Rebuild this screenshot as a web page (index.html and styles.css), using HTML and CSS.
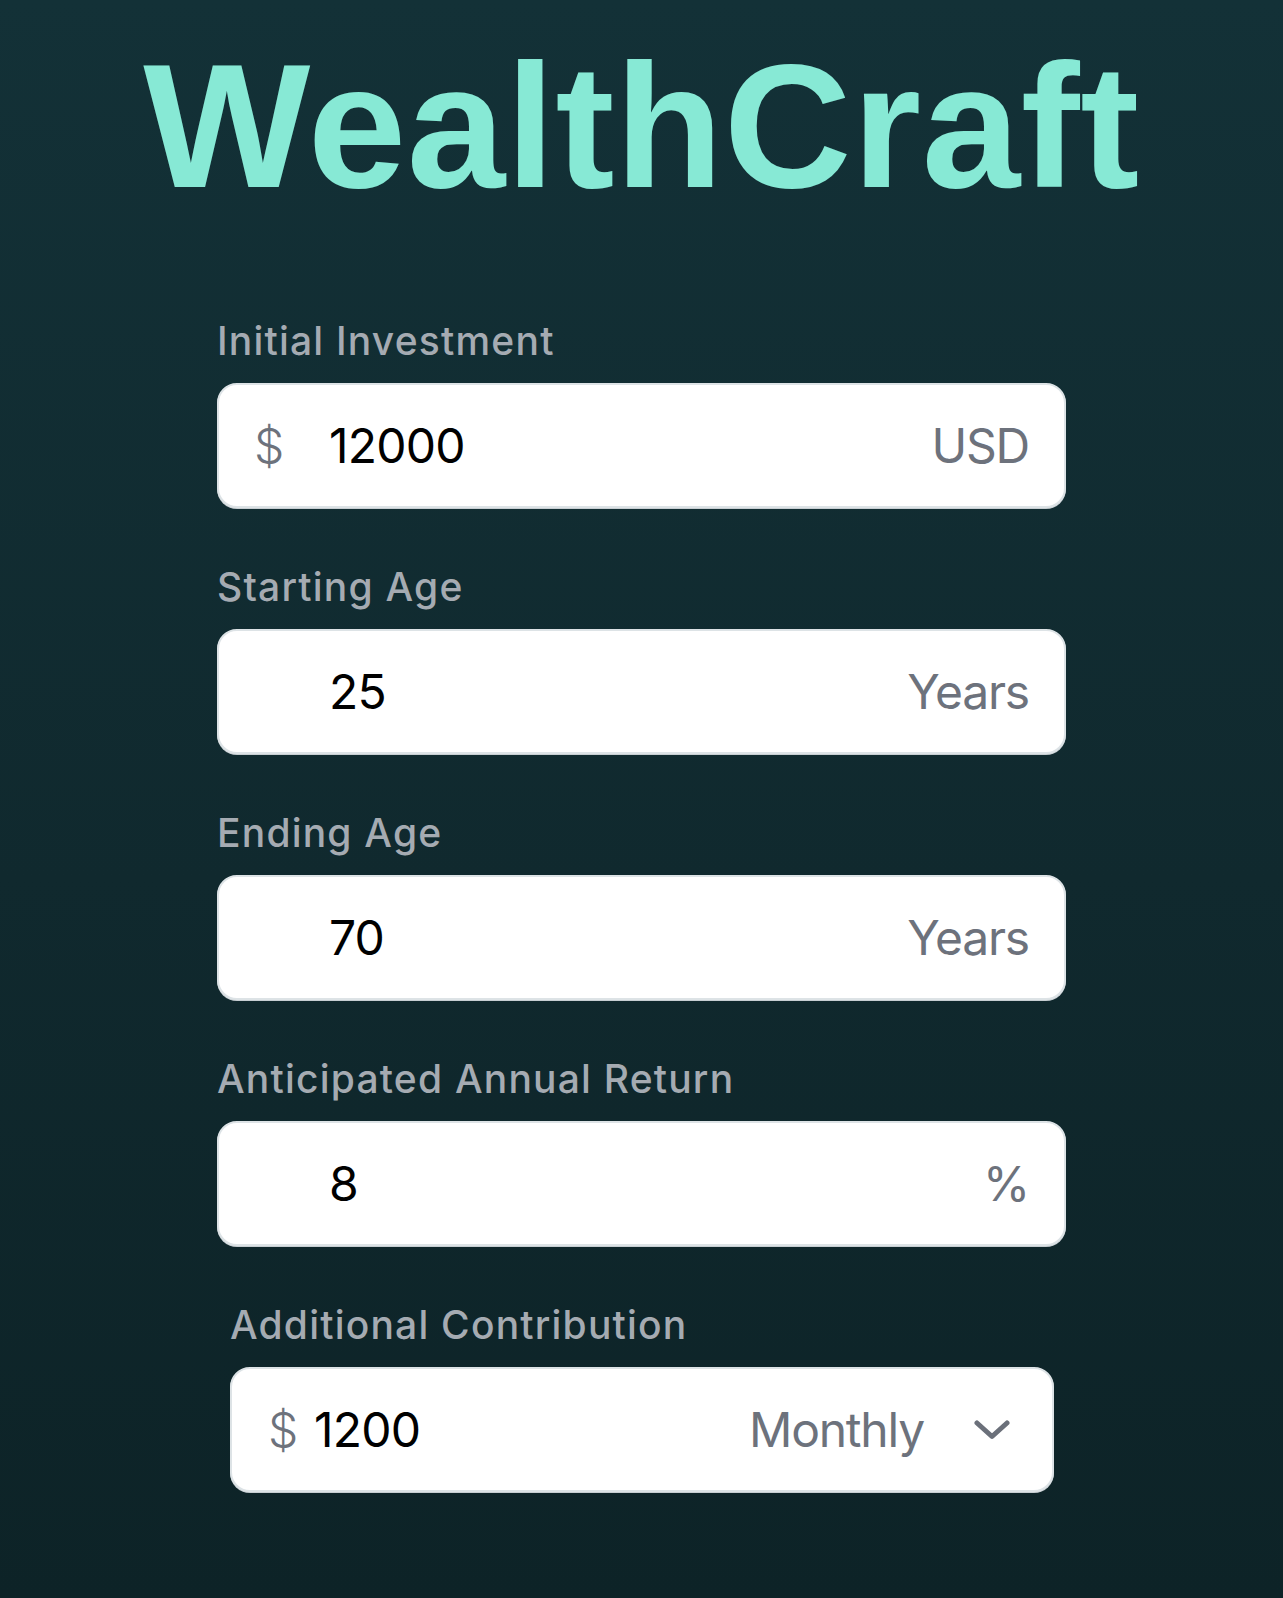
FILE: index.html
```html
<!DOCTYPE html>
<html lang="en">
<head>
<meta charset="utf-8">
<title>WealthCraft</title>
<link rel="stylesheet" href="styles.css">
</head>
<body>
<main class="app">
  <h1 class="brand">WealthCraft</h1>
  <form class="form">
    <div class="field">
      <label class="label">Initial Investment</label>
      <div class="box">
        <span class="prefix">$</span>
        <span class="value">12000</span>
        <span class="suffix">USD</span>
      </div>
    </div>
    <div class="field">
      <label class="label">Starting Age</label>
      <div class="box">
        <span class="prefix"></span>
        <span class="value">25</span>
        <span class="suffix">Years</span>
      </div>
    </div>
    <div class="field">
      <label class="label">Ending Age</label>
      <div class="box">
        <span class="prefix"></span>
        <span class="value">70</span>
        <span class="suffix">Years</span>
      </div>
    </div>
    <div class="field">
      <label class="label">Anticipated Annual Return</label>
      <div class="box">
        <span class="prefix"></span>
        <span class="value">8</span>
        <span class="suffix">%</span>
      </div>
    </div>
    <div class="field field-inset">
      <label class="label">Additional Contribution</label>
      <div class="box box-select">
        <span class="prefix prefix-tight">$</span>
        <span class="value">1200</span>
        <span class="suffix">Monthly</span>
        <svg class="chevron" viewBox="0 0 36 20" width="36" height="20" aria-hidden="true">
          <path d="M3 3 L18 16.5 L33 3" fill="none" stroke="#6b707a" stroke-width="5" stroke-linecap="round" stroke-linejoin="round"/>
        </svg>
      </div>
    </div>
  </form>
</main>
</body>
</html>
```
FILE: styles.css
```css
html, body {
  margin: 0;
  padding: 0;
}
body {
  min-height: 1598px;
  background: linear-gradient(180deg, #133137 0%, #10292e 55%, #0d2327 100%);
  font-family: "Inter", "Noto Sans", sans-serif;
}
.app {
  display: flex;
  flex-direction: column;
  align-items: center;
}
.brand {
  margin: 38px 0 0 0;
  font-family: "Liberation Sans", Arial, sans-serif;
  font-weight: 700;
  font-size: 177px;
  line-height: 176px;
  color: #87e9d5;
  letter-spacing: 0.6px;
}
.form {
  width: 849px;
  margin-top: 104px;
  display: flex;
  flex-direction: column;
  gap: 56px;
}
.field {
  display: flex;
  flex-direction: column;
  gap: 19px;
}
.field-inset {
  margin: 0 12px 0 13px;
}
.label {
  font-size: 39px;
  line-height: 46px;
  font-weight: 500;
  color: #a5abb2;
  letter-spacing: 1.2px;
}
.box {
  box-sizing: border-box;
  height: 125px;
  background: #fff;
  border: 2px solid #dde3e6;
  border-radius: 20px;
  box-shadow: 0 1px 0 #c7ced2;
  display: flex;
  align-items: center;
  padding: 0 35px 0 35px;
  font-size: 48px;
}
.prefix {
  width: 75px;
  flex: none;
  color: #6d727c;
  font-weight: 300;
}
.prefix-tight {
  width: 46px;
}
.value {
  flex: 1;
  color: #000;
  letter-spacing: -0.8px;
}
.suffix {
  color: #6d727c;
  letter-spacing: -1.2px;
}
.box-select {
  padding-left: 36px;
  padding-right: 42px;
}
.chevron {
  margin-left: 50px;
  flex: none;
}
```
